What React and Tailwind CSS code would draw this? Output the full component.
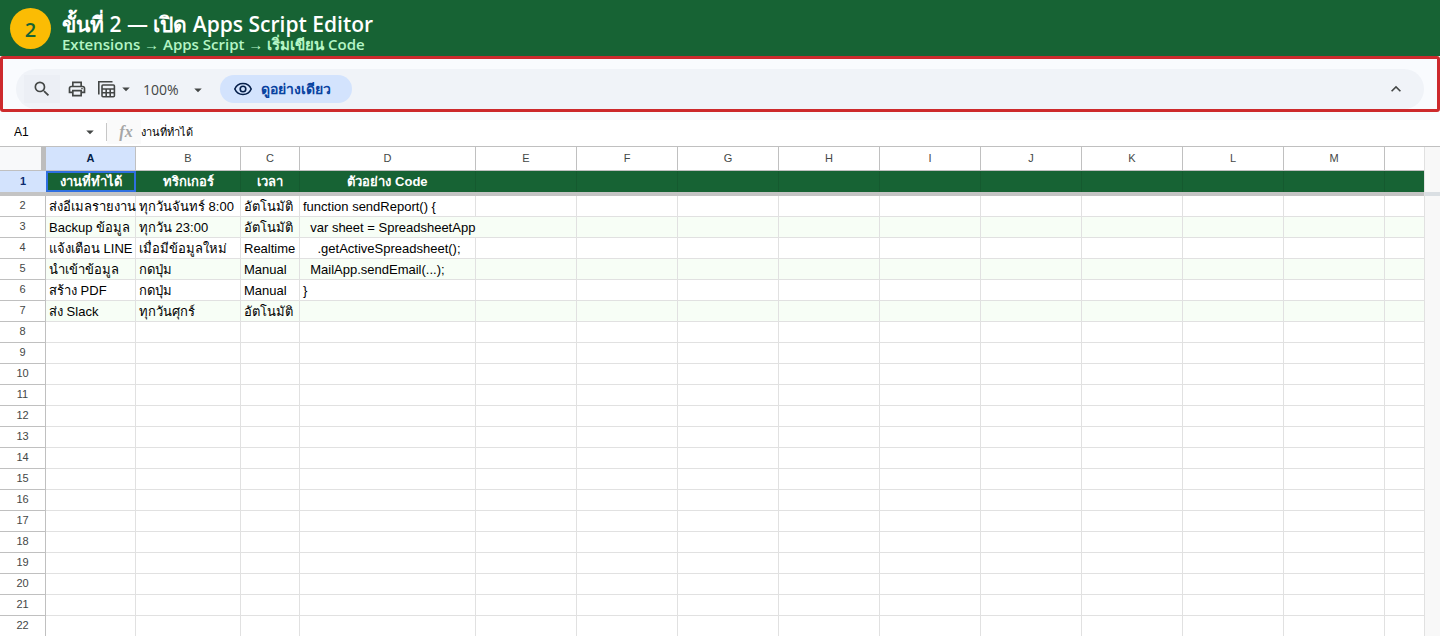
import { MdSearch, MdOutlinePrint, MdArrowDropDown, MdKeyboardArrowUp } from "react-icons/md";

const columns = ["A", "B", "C", "D", "E", "F", "G", "H", "I", "J", "K", "L", "M", ""];

const titles = ["งานที่ทำได้", "ทริกเกอร์", "เวลา", "ตัวอย่าง Code"];

const data = [
  ["ส่งอีเมลรายงาน", "ทุกวันจันทร์ 8:00", "อัตโนมัติ", "function sendReport() {"],
  ["Backup ข้อมูล", "ทุกวัน 23:00", "อัตโนมัติ", "  var sheet = SpreadsheetApp"],
  ["แจ้งเตือน LINE", "เมื่อมีข้อมูลใหม่", "Realtime", "    .getActiveSpreadsheet();"],
  ["นำเข้าข้อมูล", "กดปุ่ม", "Manual", "  MailApp.sendEmail(...);"],
  ["สร้าง PDF", "กดปุ่ม", "Manual", "}"],
  ["ส่ง Slack", "ทุกวันศุกร์", "อัตโนมัติ", ""],
];

const rowNumbers = Array.from({ length: 21 }, (_, i) => i + 2);

const CopySheetIcon = () => (
  <svg className="size-5" viewBox="0 0 20 20" fill="none" stroke="#444746" strokeWidth="1.6" aria-hidden="true">
    <path d="M1.8 15.5V2.8H15.5" />
    <rect x="5" y="6" width="12.4" height="11.7" rx="1" />
    <path d="M5 10H17.4M5 13.8H17.4M9.2 10V17.7M13.2 10V17.7" />
  </svg>
);

const EyeIcon = () => (
  <svg className="size-5" viewBox="0 0 20 20" fill="none" stroke="#041e49" strokeWidth="1.6" aria-hidden="true">
    <path d="M1.8 10C3.3 6.6 6.4 4.5 10 4.5S16.7 6.6 18.2 10C16.7 13.4 13.6 15.5 10 15.5S3.3 13.4 1.8 10Z" />
    <circle cx="10" cy="10" r="2.8" />
  </svg>
);

const Banner = () => (
  <header className="flex h-14 items-center gap-[11px] bg-[#176334] pl-[10px] font-['Open_Sans','Noto_Sans',sans-serif] font-semibold">
    <div className="flex size-[41px] items-center justify-center rounded-full bg-[#fbbc04] pt-1 text-xl text-[#176334]">
      2
    </div>
    <div className="pt-2">
      <h1 className="text-[21px] leading-6 whitespace-nowrap text-white">ขั้นที่ 2 — เปิด Apps Script Editor</h1>
      <p className="text-[15px] leading-4 whitespace-nowrap text-[#b4f5c5]">
        Extensions → Apps Script → เริ่มเขียน Code
      </p>
    </div>
  </header>
);

const Toolbar = () => (
  <div className="h-14 overflow-hidden rounded-[3px] border-3 border-[#cd2a2d] bg-[#f9fbfe] px-[13px] pt-[10px]">
    <div className="flex h-10 items-center rounded-[20px] bg-[#f0f3f8] pr-[18px] pl-2 text-[#444746]">
      <button type="button" aria-label="Search" className="flex h-7 w-9 items-center justify-center bg-[#eceff5]">
        <MdSearch className="size-5" />
      </button>
      <button type="button" aria-label="Print" className="ml-[5px] flex size-6 items-center justify-center">
        <MdOutlinePrint className="size-5" />
      </button>
      <button type="button" aria-label="Copy sheet" className="ml-2 flex items-center">
        <CopySheetIcon />
        <MdArrowDropDown className="size-[18px]" />
      </button>
      <label className="ml-2 flex items-center pt-px">
        <select
          aria-label="Zoom"
          defaultValue="100%"
          className="w-[46px] appearance-none bg-transparent font-['Open_Sans',sans-serif] text-sm outline-none"
        >
          <option>100%</option>
        </select>
        <MdArrowDropDown className="size-[18px]" />
      </label>
      <button
        type="button"
        className="ml-[13px] flex h-7 items-center gap-2 rounded-full bg-[#d3e3fd] pr-[21px] pl-[13px] font-['Liberation_Sans','Noto_Sans',sans-serif] text-sm font-bold text-[#0842a0]"
      >
        <EyeIcon />
        ดูอย่างเดียว
      </button>
      <button type="button" aria-label="Hide menus" className="ml-auto">
        <MdKeyboardArrowUp className="size-5" />
      </button>
    </div>
  </div>
);

const FormulaBar = () => (
  <div className="border-b border-[#c0c0c0] bg-[#f9fbfe] pt-2">
    <div className="flex h-[26px] items-center bg-white pb-[2px] font-['Liberation_Sans','Noto_Sans',sans-serif] text-xs">
      <input aria-label="Name box" defaultValue="A1" className="ml-[14px] w-[67px] outline-none" />
      <MdArrowDropDown className="size-[18px] text-[#444746]" />
      <span className="ml-[7px] h-[18px] w-px bg-[#c7c7c7]" />
      <span className="flex h-full w-[34px] items-center justify-center bg-[#fafafa] pl-1 font-['Liberation_Serif',serif] text-base font-bold text-[#a6a6a6] italic">
        fx
      </span>
      <input aria-label="Formula" defaultValue="งานที่ทำได้" className="h-full flex-1 text-[11px] outline-none" />
    </div>
  </div>
);

const Sheet = () => (
  <div className="flex font-['Liberation_Sans','Noto_Sans',sans-serif]">
    <div className="min-w-0 flex-1">
      <table className="w-full table-fixed border-separate border-spacing-0 whitespace-pre">
        <colgroup>
          <col className="w-[46px]" />
          <col className="w-[90px]" />
          <col className="w-[105px]" />
          <col className="w-[59px]" />
          <col className="w-[176px]" />
          {columns.slice(4, 13).map((name) => (
            <col key={name} className="w-[101px]" />
          ))}
          <col />
        </colgroup>
        <thead>
          <tr className="h-6 text-[11px] text-[#444746]">
            <th className="border-r-[5px] border-b border-[#c0c0c0] border-r-[#bdbdbd] bg-[#f8f9fa] p-0" />
            {columns.map((name, i) => (
              <th
                key={i}
                scope="col"
                className={`border-b border-[#c0c0c0] p-0 ${i < 13 ? "border-r" : ""} ${
                  i === 0 ? "bg-[#d3e3fd] font-bold text-[#041e49]" : "font-normal"
                }`}
              >
                {name}
              </th>
            ))}
          </tr>
          <tr className="h-[25px] text-[13px] text-white">
            <th
              scope="row"
              className="border-b-4 border-[#c4c4c4] bg-[#d3e3fd] p-0 text-[11px] font-bold text-[#0b2a6f]"
            >
              1
            </th>
            {columns.map((name, i) => (
              <th key={i} className="border-b-4 border-[#c4c4c4] bg-[#176334] p-0 font-bold">
                <div
                  className={`h-[21px] leading-[21px] ${i < 13 ? "border-r border-[#155a2f]" : ""} ${
                    i === 0 ? "outline-2 -outline-offset-2 outline-[#2f6fe0]" : ""
                  }`}
                >
                  {titles[i]}
                </div>
              </th>
            ))}
          </tr>
        </thead>
        <tbody>
          {rowNumbers.map((num) => {
            const cells = data[num - 2] || [];
            const striped = num < 8 && num % 2 === 1;
            return (
              <tr key={num} className={`h-[21px] text-[13px] leading-4 text-black ${striped ? "bg-[#f7fef6]" : ""}`}>
                <th
                  scope="row"
                  className="border-r border-b border-[#c0c0c0] bg-white p-0 pb-[2px] text-[11px] leading-4 font-normal text-[#444746]"
                >
                  {num}
                </th>
                {columns.map((name, i) => (
                  <td
                    key={i}
                    className={`border-b border-[#e1e1e1] pt-[2px] pr-0 pb-0 pl-[3px] ${
                      i < 13 && !(num === 3 && i === 3) ? "border-r" : ""
                    }`}
                  >
                    {cells[i]}
                  </td>
                ))}
              </tr>
            );
          })}
        </tbody>
      </table>
    </div>
    <div className="w-4 border-l border-[#e1e1e1] bg-[#f8f8f8] pt-[45px]">
      <div className="h-1 bg-[#dadfe3]" />
    </div>
  </div>
);

export default function App() {
  return (
    <main className="h-screen overflow-hidden bg-white">
      <Banner />
      <Toolbar />
      <FormulaBar />
      <Sheet />
    </main>
  );
}
